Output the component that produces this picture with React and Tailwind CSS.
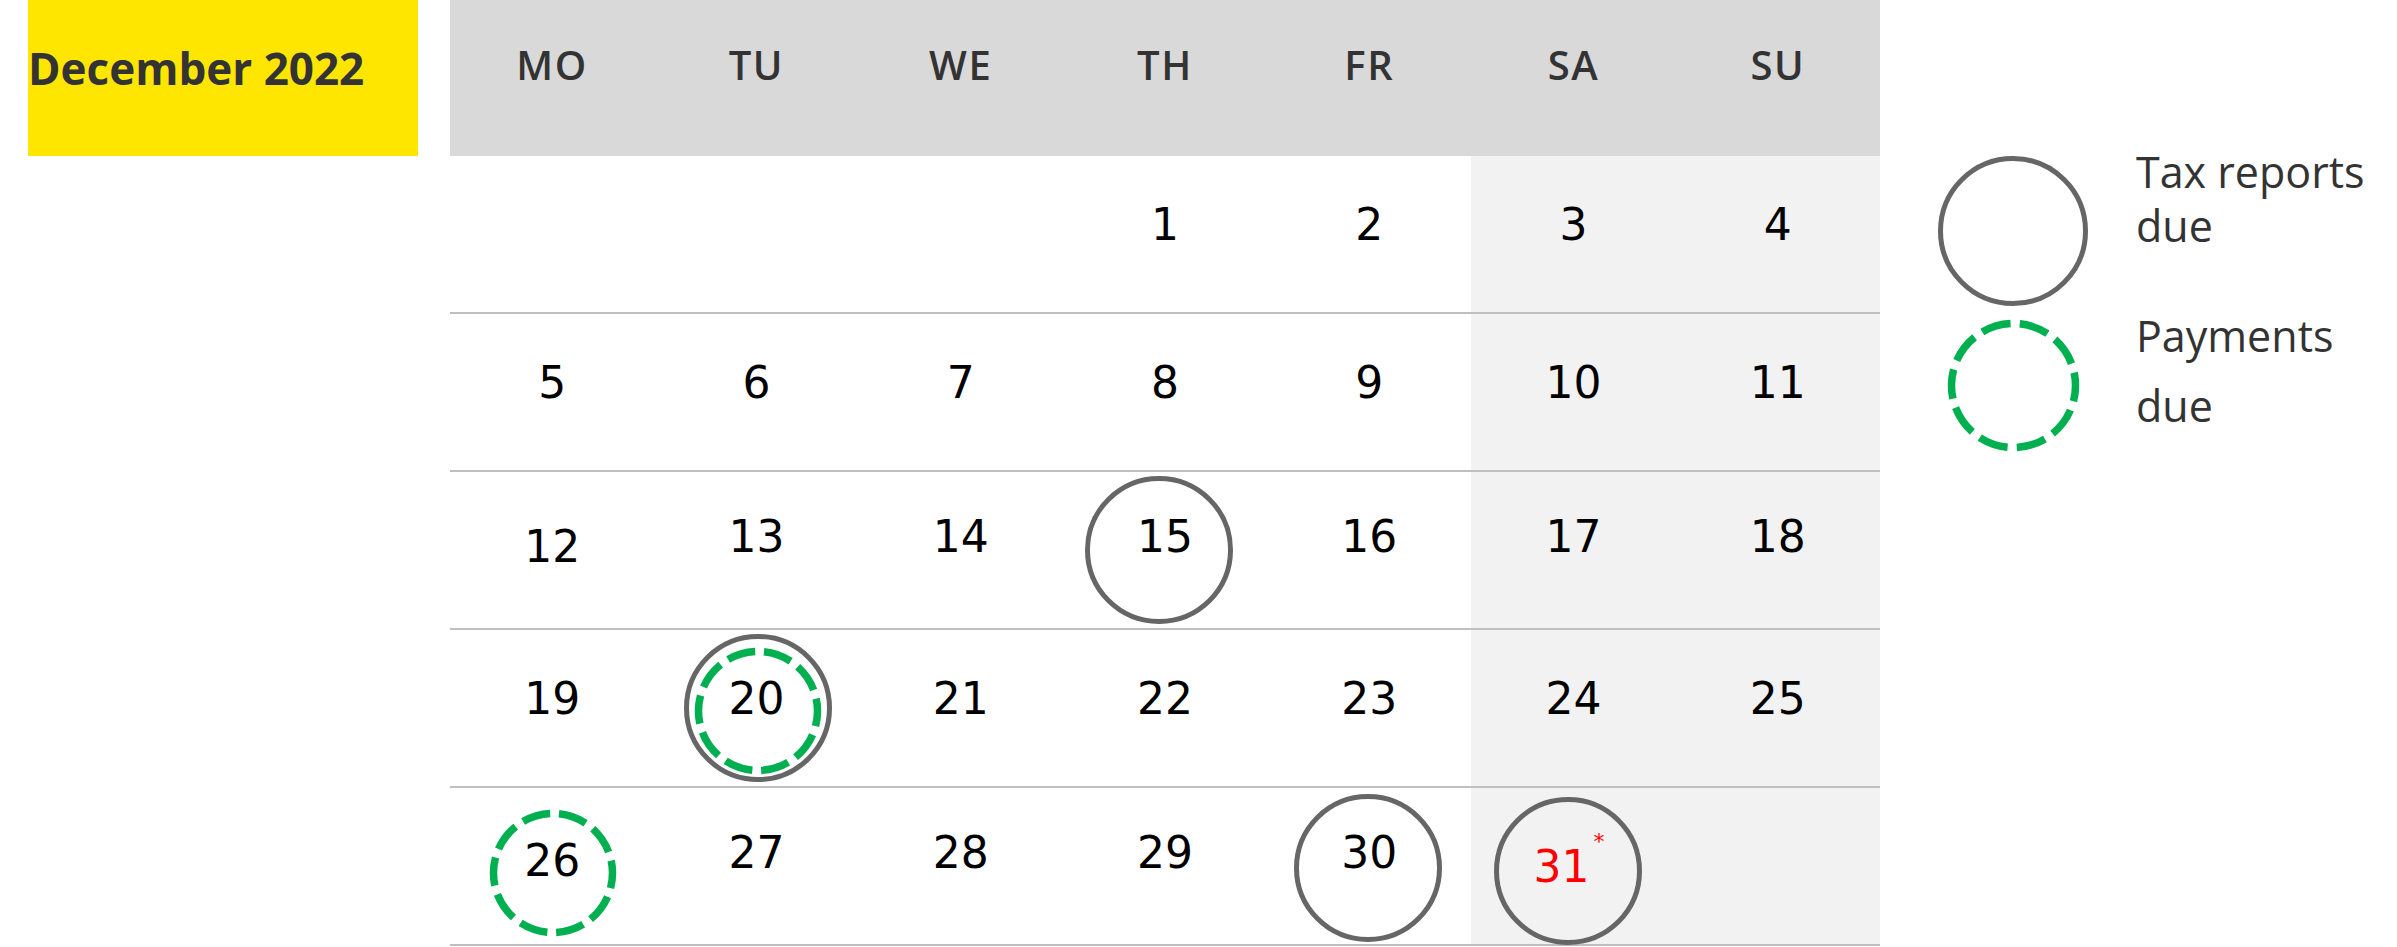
import React from "react";

const weeks = [
  [null, null, null, 1, 2, 3, 4],
  [5, 6, 7, 8, 9, 10, 11],
  [12, 13, 14, 15, 16, 17, 18],
  [19, 20, 21, 22, 23, 24, 25],
  [26, 27, 28, 29, 30, 31, null],
];

const dayNames = ["MO", "TU", "WE", "TH", "FR", "SA", "SU"];

// vertical nudge of the numbers per week row, as in the original image
const rowShift = [
  "-translate-y-[9px]",
  "-translate-y-[9px]",
  "-translate-y-[13px]",
  "-translate-y-[9px]",
  "-translate-y-[13px]",
];

const numberShift = {
  12: "-translate-y-[3px]",
  26: "-translate-y-[5px]",
  31: "translate-y-[1px] -translate-x-[12px]",
};

// tax report days (grey ring) and payment days (green dashed ring)
const taxDays = {
  15: "-translate-x-[6px]",
  20: "translate-x-[2px]",
  30: "-translate-x-[1px] translate-y-[2px]",
  31: "-translate-x-[6px] translate-y-[5px]",
};
const payDays = {
  20: "translate-x-[2px] translate-y-[3px]",
  26: "translate-x-[1px] translate-y-[7px]",
};

const GreyRing = ({ className = "" }) => (
  <div
    className={`absolute left-1/2 top-1/2 -ml-[74px] -mt-[74px] w-[148px] h-[148px] rounded-full border-[5px] border-[#666666] ${className}`}
  />
);

const GreenRing = ({ size = 128 }) => {
  const r = size / 2 - 4.5;
  const c = 2 * Math.PI * r;
  const dash = c / 10;
  return (
    <svg width={size} height={size} viewBox={`0 0 ${size} ${size}`}>
      <circle
        cx={size / 2}
        cy={size / 2}
        r={r}
        fill="none"
        stroke="#00b050"
        strokeWidth="7.5"
        strokeDasharray={`${dash * 0.76} ${dash * 0.24}`}
        strokeDashoffset={dash * 0.35}
      />
    </svg>
  );
};

const DayCell = ({ day, col, row }) => {
  const weekend = col >= 5;
  return (
    <div
      className={`relative h-[158px] border-b-2 border-[#bfbfbf] flex items-center justify-center ${
        weekend ? "bg-[#f2f2f2]" : "bg-white"
      }`}
    >
      {day && (
        <span
          className={`relative leading-none text-[44px] ${
            day === 31 ? "text-[#ff0000]" : "text-black"
          } ${numberShift[day] || rowShift[row]}`}
          style={{ fontFamily: '"DejaVu Sans", Verdana, sans-serif' }}
        >
          {day}
          {day === 31 && (
            <span className="absolute left-full top-[-14px] ml-[4px] text-[22px] leading-none">
              *
            </span>
          )}
        </span>
      )}
      {day && taxDays[day] && <GreyRing className={taxDays[day]} />}
      {day && payDays[day] && (
        <div
          className={`absolute left-1/2 top-1/2 -ml-[64px] -mt-[64px] w-[128px] h-[128px] ${payDays[day]}`}
        >
          <GreenRing size={128} />
        </div>
      )}
    </div>
  );
};

export default function App() {
  return (
    <div
      className="w-[2397px] h-[947px] bg-white flex items-start overflow-hidden"
      style={{ fontFamily: '"Open Sans", "Liberation Sans", sans-serif' }}
    >
      {/* month label */}
      <div className="ml-[28px] w-[390px] h-[156px] bg-[#ffe600] pt-[46px]">
        <div className="text-[44px] font-bold leading-none text-[#333333]">
          December 2022
        </div>
      </div>

      {/* calendar */}
      <div className="ml-[32px] w-[1430px]">
        <div className="grid grid-cols-7 h-[156px] bg-[#d9d9d9]">
          {dayNames.map((d) => (
            <div
              key={d}
              className="pt-[45px] text-center text-[40px] font-semibold leading-none tracking-[0.04em] text-[#333333]"
            >
              {d}
            </div>
          ))}
        </div>
        <div className="grid grid-cols-7">
          {weeks.map((week, row) =>
            week.map((day, col) => (
              <DayCell key={`${row}-${col}`} day={day} col={col} row={row} />
            ))
          )}
        </div>
      </div>

      {/* legend */}
      <div className="ml-[58px] pt-[145px] text-[43px] font-normal text-[#333333]">
        <div className="flex items-start h-[156px]">
          <div className="w-[150px] flex justify-center pt-[11px]">
            <div className="w-[150px] h-[150px] rounded-full border-[5px] border-[#666666]" />
          </div>
          <div className="ml-[48px] leading-[54px]">
            Tax reports
            <br />
            due
          </div>
        </div>
        <div className="flex items-start">
          <div className="w-[150px] flex justify-center pt-[18px]">
            <GreenRing size={133} />
          </div>
          <div className="ml-[48px] leading-[70px]">
            Payments
            <br />
            due
          </div>
        </div>
      </div>
    </div>
  );
}
